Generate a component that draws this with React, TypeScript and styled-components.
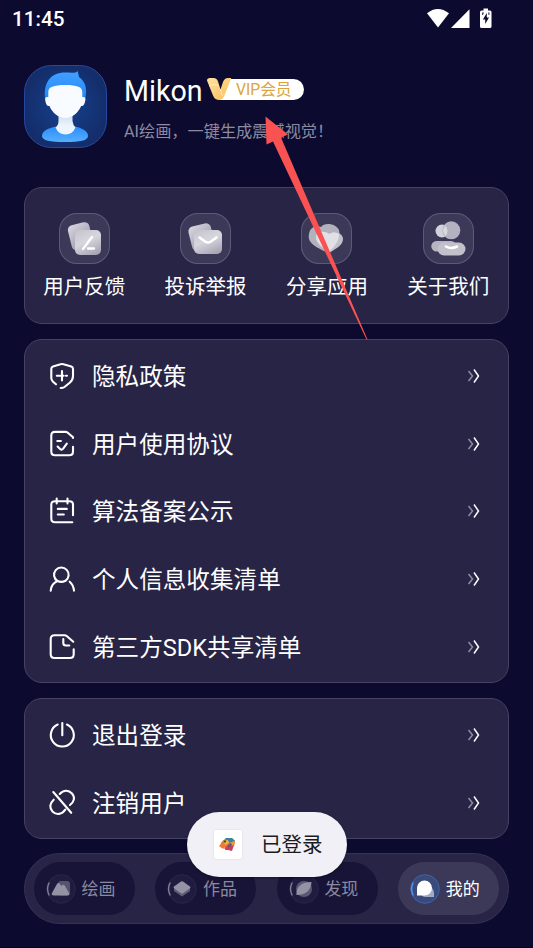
import React from "react";
import styled, { createGlobalStyle } from "styled-components";

const Global = createGlobalStyle`
  * { box-sizing: border-box; }
  html, body { margin: 0; padding: 0; background: #0c0a2f; }
  body { font-family: Roboto, "Noto Sans CJK SC", sans-serif; color: #fff; }
  svg { display: block; flex: none; }
`;

const Screen = styled.div`
  position: relative;
  width: 533px;
  height: 948px;
  overflow: hidden;
  background: #0c0a2f;
  border-bottom: 1px solid #05041a;
`;

const StatusBar = styled.header`
  display: flex;
  justify-content: space-between;
  align-items: center;
  height: 37px;
  padding: 0 36px 0 12px;
`;

const Clock = styled.span`
  font-size: 20.7px;
  font-weight: 500;
  line-height: 24px;
`;

const Profile = styled.section`
  display: flex;
  gap: 17px;
  height: 83px;
  margin: 28px 24px 0;
`;

const Identity = styled.div`
  display: flex;
  flex-direction: column;
  padding-top: 8px;
`;

const NameRow = styled.div`
  display: flex;
  align-items: flex-start;
  height: 36px;
`;

const Name = styled.h1`
  margin: 0;
  width: 83px;
  font-size: 28.600px;
  font-weight: 400;
  line-height: 37px;
`;

const Vip = styled.div`
  position: relative;
  display: flex;
  align-items: center;
  width: 72px;
  height: 21px;
  margin: 6px 0 0 25px;
  padding-left: 4px;
  border-radius: 0 11px 11px 0;
  background: #fff;
  color: #dba53b;
  font-size: 15.700px;
  line-height: 21px;
  white-space: nowrap;
`;

const VipMark = styled.svg`
  position: absolute;
  left: -25px;
  top: -2px;
`;

const Tagline = styled.p`
  margin: 11px 0 0;
  color: #8d8ba1;
  font-size: 16.2px;
  line-height: 24px;
  white-space: nowrap;
`;

const Panel = styled.section<{ $height: number; $top: number }>`
  width: 485px;
  height: ${(p) => p.$height}px;
  margin: ${(p) => p.$top}px 0 0 24px;
  border: 1px solid #454262;
  border-radius: 18px;
  background: #272446;
`;

const Shortcuts = styled(Panel)`
  display: grid;
  grid-template-columns: repeat(4, 121.3px);
  padding-top: 25px;
`;

const Shortcut = styled.div`
  display: flex;
  flex-direction: column;
  align-items: center;
  width: 118.600px;
  gap: 8px;
  font-size: 20.5px;
  line-height: 30px;
  white-space: nowrap;
`;

const Tile = styled.div`
  width: 51px;
  height: 51px;
  border-radius: 18px;
  background: #3c3958;
  box-shadow: inset 0 0 0 1px #5c5a77;
`;

const Menu = styled(Panel)`
  padding-top: 2px;
`;

const MenuRow = styled.div`
  display: flex;
  align-items: center;
  height: 67.7px;
  padding: 0 27px 0 24px;
`;

const MenuLabel = styled.span`
  flex: 1;
  margin-left: 17px;
  padding-top: 2.400px;
  font-size: 23.6px;
  line-height: 34px;
`;

const Nav = styled.nav`
  display: flex;
  gap: 20.4px;
  width: 485px;
  height: 71px;
  margin: 14px 0 0 24px;
  padding: 8px 0 0 9px;
  border: 1px solid #35325a;
  border-radius: 36px;
  background: #272446;
`;

const NavItem = styled.div<{ $active?: boolean }>`
  display: flex;
  align-items: center;
  flex: none;
  width: 101px;
  height: 53px;
  padding-left: 12px;
  border-radius: 27px;
  background: ${(p) => (p.$active ? "#3c3958" : "#171438")};
  color: ${(p) => (p.$active ? "#fff" : "#8b899f")};
  font-size: 17px;
  line-height: 26px;
  white-space: nowrap;
`;

const NavLabel = styled.span`
  margin-left: 5.600px;
`;

const Toast = styled.div`
  position: absolute;
  left: 186.500px;
  top: 812px;
  display: flex;
  align-items: center;
  width: 160px;
  height: 65px;
  padding-left: 27px;
  border-radius: 33px;
  background: #f1f0f6;
  color: #1b1b1f;
  font-size: 20.5px;
  line-height: 30px;
  box-shadow: 0 1px 3px rgba(0, 0, 0, 0.4);
`;

const ToastIcon = styled.div`
  display: flex;
  align-items: center;
  justify-content: center;
  width: 28px;
  height: 29px;
  margin-right: 19.500px;
  border-radius: 2px;
  background: #fff;
  box-shadow: 0 0 2px rgba(0, 0, 0, 0.12);
`;

const ToastText = styled.span`
  padding-top: 1px;
`;

const Pointer = styled.svg`
  position: absolute;
  left: 260px;
  top: 110px;
`;

const StatusIcons = () => (
  <svg width="72" height="24" viewBox="425 6 72 24" fill="#fff">
    <path d="M427 12.2Q437.8 3.6 449 12.2L438 26.5Z" />
    <path d="M469.5 8.3V27H451Z" />
    <path d="M483.500 7.5h4.500v2h2q1.500 0 1.500 1.500v14.500q0 1.500-1.500 1.500h-8.500q-1.500 0-1.500-1.500V11q0-1.500 1.500-1.500h2z" />
    <path d="M486.800 12v4.500h2.200L485.200 23v-4.500h-2.300z" fill="#0c0a2f" />
    <path d="M482 11.500h2l-1 2.500h-1zM488 11.500h1.500v2.500h-1z" fill="#0c0a2f" opacity=".75" />
  </svg>
);

const Avatar = () => (
  <svg width="83" height="83" viewBox="0 0 83 83">
    <defs>
      <radialGradient id="avBg"><stop stopColor="#15418e" /><stop offset="1" stopColor="#142e6c" /></radialGradient>
      <linearGradient id="hair" x2="0" y2="1"><stop stopColor="#43a0ff" /><stop offset="1" stopColor="#2389f7" /></linearGradient>
      <linearGradient id="neck" x2="0" y2="1"><stop stopColor="#c6daf1" /><stop offset=".6" stopColor="#eef4fb" /></linearGradient>
      <linearGradient id="body" x2="0" y2="1"><stop stopColor="#2b8cfb" /><stop offset="1" stopColor="#55b0ff" /></linearGradient>
    </defs>
    <rect x=".5" y=".5" width="82" height="82" rx="27" fill="url(#avBg)" stroke="#2846a4" />
    <path d="M21 33C19.500 17 27 7.500 41 7.500c5 0 8 .5 10 0 2-.4 2-1 2.700-1.500l1.300 6c7 5 8 12 6.500 21z" fill="url(#hair)" />
    <path d="M18 71C18 65 26 63 32 61.500h19c6 1.500 13 4 13 9.500 0 4.500-8 6-23 6s-23-1.500-23-6z" fill="url(#body)" />
    <path d="M34.500 48h14v8q.5 4 3 6.500-3 7-10 7t-10-7q3-2.500 3-6.500z" fill="url(#neck)" />
    <path d="M24.300 27c0-5 5-7 17-7s17 2 17 7v5c3-.5 3.500 1 3 3.500-.7 3.500-1.700 6-4.200 5.500-2.500 6.500-9 12-15.800 12s-13.300-5.500-15.800-12c-2.500.5-3.700-2-4.200-5.500-.5-2.500 0-4 3-3.500z" fill="#f8fbff" />
  </svg>
);

const VipV = () => (
  <VipMark width="28" height="24" viewBox="0 0 28 24">
    <defs><linearGradient id="gold" x2="1" y2="1"><stop stopColor="#ffe1a0" /><stop offset="1" stopColor="#f9be58" /></linearGradient></defs>
    <path d="M22 2H28V23H12Z" fill="#fff" />
    <path d="M0 3.500Q0 1 3 1H6.500Q10 1 11 4.500L13.500 12.500 16 5Q17.500 1 21 1H24.300L17 19.500Q15.500 23 11.500 23 7.500 22.500 6 18.500Z" fill="url(#gold)" />
    <path d="M2 9Q7 6 11.500 8.500M13.500 12.500 15.500 19" stroke="#fff1ca" fill="none" strokeWidth=".8" />
  </VipMark>
);

const ShortcutDefs = () => (
  <defs>
    <linearGradient id="card" x2=".5" y2="1"><stop stopColor="#dad8e1" /><stop offset="1" stopColor="#9997aa" /></linearGradient>
    <linearGradient id="front" x1=".2" x2=".7" y2="1"><stop stopColor="#c7c6d0" /><stop offset=".45" stopColor="#d7d6de" /><stop offset="1" stopColor="#a8a6b6" /></linearGradient>
  </defs>
);

const shortcutArt: Record<string, React.ReactNode> = {
  feedback: (
    <>
      <rect x="10.500" y="10.500" width="22" height="26" rx="5" transform="rotate(-14 21 23)" fill="url(#card)" />
      <rect x="16" y="17" width="26" height="25" rx="5" fill="url(#front)" />
      <path d="M24 36 33 24M29 35.500h6" stroke="#fff" strokeWidth="2.300" strokeLinecap="round" />
    </>
  ),
  report: (
    <>
      <rect x="10" y="11.500" width="23" height="25" rx="5" transform="rotate(-14 22 24)" fill="url(#card)" />
      <rect x="14" y="17" width="28" height="24" rx="5" fill="url(#front)" />
      <path d="m19.500 24.500 6 4.200q2.500 1.600 5 0l6-4.200" stroke="#fff" strokeWidth="2.500" strokeLinecap="round" fill="none" />
    </>
  ),
  share: (
    <>
      <path d="M20 14C23 9 35 10 38 17c2 7-3 14-13 22C15 34 6 30 8 21c1-7 7-9 12-7z" fill="#b3b1bd" />
      <path d="M28 21c5-4 14-1 14 5 0 6-6 9-14 14-7-5-13-9-13-16 0-5 8-7 13-3z" fill="#c2c0ca" />
      <path d="M28 21c4-2 7-2 10 0 0 7-4 12-10 18-7-5-13-9-13-15 0-5 8-7 13-3z" fill="#e1e0e6" />
    </>
  ),
  about: (
    <>
      <circle cx="19" cy="18" r="6.500" fill="#d3d2db" />
      <circle cx="28.300" cy="17.300" r="9" fill="#b4b2c0" />
      <path d="M22.500 12.500q-5 5 0 10.500 4-4 0-10.500z" fill="#d9d8df" />
      <rect x="8.300" y="28" width="25" height="10.500" rx="5.200" fill="#b7b5c2" />
      <rect x="14.500" y="29.500" width="28" height="13" rx="6.500" fill="#c2c0cb" />
      <path d="M23 33.500q5 3 11 0" stroke="#fff" strokeWidth="2.600" fill="none" strokeLinecap="round" />
    </>
  ),
};

const menuArt: Record<string, string> = {
  shield: "M7 21.300 4 18.700Q2.300 17.200 2.300 15V6Q2.300 4 4 3.400L11.500 1.300Q13 .8 14.500 1.300L22.300 3.400Q24 4 24 6V13Q24 17 21 19.500L15.500 24Q14 25 11.700 25M13 8v9.500M7.800 12.700h6.800M17 12.700h1",
  agreement: "M24 7V6.300L18.500 1.500Q17.700 .9 16.500.9H6Q2.300.9 2.300 4.600V20.500Q2.300 24.300 6 24.300H20.300Q24 24.300 24 20.500V15.700M8.300 10h3.600M8.600 15.500l2.500 2.500q1.600 1.300 3.100-.4l3.600-5",
  record: "M23.300 24.200H6Q2.300 24.200 2.300 20.500V6.500Q2.300 3.200 6 3.200H20.300Q24 3.200 24 6.500V17.200M7.700.5v5M18.500.5v5M8.800 10.900h9M8.800 16.500h6",
  person: "M1.700 24.700Q2 18 8.500 15A7.300 7.300 0 1 1 16.500 14.800M20.700 15.700Q24.500 19 25 24.700M8.500 15Q12.500 16.800 16.500 14.800",
  file: "M24.300 7.700 17.700 2Q16.800 1.200 15.500 1.200H5.500Q1.700 1.200 1.700 5V20.200Q1.700 24 5.500 24H21Q24.700 24 24.700 20.200V15.300M14.300 5V9Q14.300 11.500 16.800 11.500H20.300",
  power: "M8.700 2.500A11.500 11.500 0 1 0 17.900 2.500M13.300 1v12.200",
  unlink: "M4.300 2 22.200 22.800M10.700 4C15-.8 20 .4 23 3.500 26.500 7.500 25 12 21 15M4.700 9.700C.5 13.500.3 18 3.500 21.500 7.500 25.500 13 24.500 16.300 19.700",
};

const Chevrons = () => (
  <svg width="14" height="16" viewBox="0 0 14 16" fill="none" strokeWidth="1.500">
    <path d="M1.500 3 5.500 8l-4 5" stroke="#8f8da5" />
    <path d="M7 1.500 11.500 8 7 14.500" stroke="#fff" />
  </svg>
);

const navArt: Record<string, React.ReactNode> = {
  draw: (
    <>
      <rect x="12" y="7" width="12" height="14.500" rx="3" fill="#56536e" />
      <path d="M6 19 11 10q1-2 3 0l1.500 2 1-1q1.500-1 2.500 1l4 7q1 2.500-2 2.500H8q-3 0-2-2.500z" fill="#9492a5" />
    </>
  ),
  works: (
    <>
      <path d="m7 17 8 5.500 8-5.500v-3H7z" fill="#5f5d75" />
      <path d="M14 7.600q1-.8 2 0l7 5q1 .8 0 1.600l-7 5q-1 .7-2 0l-7-5q-1-.8 0-1.600z" fill="#9492a5" />
    </>
  ),
  discover: (
    <>
      <circle cx="15" cy="15" r="8" fill="#5a5871" />
      <path d="M7.500 21C7 14 11 8 22.500 8 22 17 16 21 7.500 21z" fill="#9492a5" />
    </>
  ),
  mine: (
    <>
      <path d="M17 12c5 0 7 4 7 8v3h-8q-5 0-6-5z" fill="#a3abc7" />
      <path d="M7 21v-7a7.500 7.500 0 1 1 7.500 7.500H7z" fill="#fff" />
    </>
  ),
};

const NavIcon = ({ name, active }: { name: string; active?: boolean }) => (
  <svg width="30" height="30" viewBox="0 0 30 30">
    <circle cx="15" cy="15" r="14.300" fill={active ? "#3a4b7b" : "#1f1c40"} stroke={active ? "#3567ad" : "#29264b"} />
    <path d="M3.300 8.500Q-.2 15 3.300 21.500" fill="none" stroke={active ? "#4b98f5" : "#817f96"} strokeWidth="1.400" />
    {navArt[name]}
  </svg>
);

const Bird = () => (
  <svg width="17" height="15" viewBox="0 0 17 15">
    <path d="M1 9Q2 4 6 2l7-1 3 3-1 5-4 3-5-2z" fill="#d17c38" />
    <path d="M6 1h7l3 3-3 2-5-2z" fill="#3286a6" />
    <path d="M0 9 5 4l3 4-4 4z" fill="#f07936" />
    <path d="m5 4 4-1 1 3-4 2z" fill="#e9ba33" />
    <path d="m8 9 5-4 2 3-2 6-4-1-3 0z" fill="#cc3d62" />
    <path d="m11 6 4-2 1 3-3 2z" fill="#ee9a3b" />
    <path d="m9 8 3-2 1 2-4 3z" fill="#705183" />
    <path d="m5 11 3-2-1 4z" fill="#dd453c" />
    <circle cx="6" cy="4.500" r="1" fill="#26323e" />
  </svg>
);

const MenuItem = ({ icon, label }: { icon: string; label: string }) => (
  <MenuRow>
    <svg width="26" height="26" viewBox="0 0 26 26" fill="none" stroke="#fff" strokeWidth="2.100" strokeLinecap="round" overflow="visible">
      <path d={menuArt[icon]} />
    </svg>
    <MenuLabel>{label}</MenuLabel>
    <Chevrons />
  </MenuRow>
);

const shortcuts = [["feedback", "用户反馈"], ["report", "投诉举报"], ["share", "分享应用"], ["about", "关于我们"]];
const policies = [["shield", "隐私政策"], ["agreement", "用户使用协议"], ["record", "算法备案公示"], ["person", "个人信息收集清单"], ["file", "第三方SDK共享清单"]];
const account = [["power", "退出登录"], ["unlink", "注销用户"]];
const tabs = [["draw", "绘画"], ["works", "作品"], ["discover", "发现"], ["mine", "我的"]];

export default function App() {
  return (
    <Screen>
      <Global />
      <StatusBar><Clock>11:45</Clock><StatusIcons /></StatusBar>
      <Profile>
        <Avatar />
        <Identity>
          <NameRow><Name>Mikon</Name><Vip><VipV />VIP会员</Vip></NameRow>
          <Tagline>AI绘画，一键生成震撼视觉！</Tagline>
        </Identity>
      </Profile>
      <Shortcuts $height={137} $top={39}>
        {shortcuts.map(([icon, label]) => (
          <Shortcut key={icon}>
            <Tile><svg width="51" height="51" viewBox="0 0 51 51"><ShortcutDefs />{shortcutArt[icon]}</svg></Tile>
            {label}
          </Shortcut>
        ))}
      </Shortcuts>
      <Menu $height={344} $top={15}>
        {policies.map(([icon, label]) => <MenuItem key={icon} icon={icon} label={label} />)}
      </Menu>
      <Menu $height={141} $top={15}>
        {account.map(([icon, label]) => <MenuItem key={icon} icon={icon} label={label} />)}
      </Menu>
      <Nav>
        {tabs.map(([icon, label]) => (
          <NavItem key={icon} $active={icon === "mine"}>
            <NavIcon name={icon} active={icon === "mine"} />
            <NavLabel>{label}</NavLabel>
          </NavItem>
        ))}
      </Nav>
      <Toast><ToastIcon><Bird /></ToastIcon><ToastText>已登录</ToastText></Toast>
      <Pointer width="110" height="232" viewBox="260 110 110 232" fill="#fa5252">
        <path d="M265.500 116.500 288 134.500 281 137.500 367.500 339.500 366.500 339.500 273 141.500 266.500 144.500Z" />
      </Pointer>
    </Screen>
  );
}
